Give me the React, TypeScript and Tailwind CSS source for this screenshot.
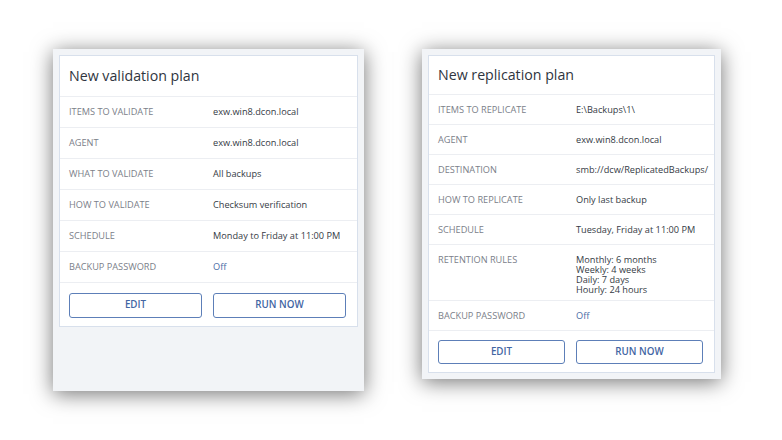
import React from "react";

type Row = { label: string; value: React.ReactNode; blue?: boolean; multi?: boolean };

function Card({
  title,
  rows,
  rowH,
  titleH,
  outerW,
  outerH,
  labelW,
  btnWrap,
  btnH,
}: {
  title: string;
  rows: Row[];
  rowH: string;
  titleH: string;
  outerW: string;
  outerH: string;
  labelW: string;
  btnWrap: string;
  btnH: string;
}) {
  return (
    <div
      className={`${outerW} ${outerH} bg-[#f2f4f7] p-[6px] shadow-[0_3px_20px_rgba(0,0,0,0.55)]`}
    >
      <div className="bg-white border border-[#d8e0ec]">
        <div className={`${titleH} flex items-center px-[9px] text-[14.2px] text-[#2f3540] border-b border-[#eceef2]`}>
          {title}
        </div>
        {rows.map((r, i) => (
          <div
            key={i}
            className={`flex px-[9px] text-[9.2px] border-b border-[#eceef2] whitespace-nowrap ${
              r.multi ? "items-start pt-[10px] pb-[5px]" : `${rowH} items-center`
            }`}
          >
            <div className={`${labelW} shrink-0 text-[#7b8089] leading-[10px]`}>{r.label}</div>
            <div className={`${r.blue ? "text-[#4c6da6]" : "text-[#353b45]"} leading-[10px]`}>{r.value}</div>
          </div>
        ))}
        <div className={`flex gap-[11px] pl-[9px] pr-[11px] ${btnWrap}`}>
          <button className={`flex-1 ${btnH} rounded-[3px] border-[1.5px] border-[#5d7fb8] text-[#4265a3] text-[9.8px] font-semibold`}>
            EDIT
          </button>
          <button className={`flex-1 ${btnH} rounded-[3px] border-[1.5px] border-[#5d7fb8] text-[#4265a3] text-[9.8px] font-semibold`}>
            RUN NOW
          </button>
        </div>
      </div>
    </div>
  );
}

export default function App() {
  return (
    <div
      className="w-[782px] h-[440px] bg-white flex items-start pl-[53px] pt-[49px] gap-[58px]"
      style={{ fontFamily: '"Open Sans", "Noto Sans", sans-serif' }}
    >
      <Card
        title="New validation plan"
        outerW="w-[311px]"
        outerH="h-[342px]"
        titleH="h-[41px]"
        rowH="h-[31px]"
        labelW="w-[144px]"
        btnWrap="pt-[10px] pb-[8px]"
        btnH="h-[25px]"
        rows={[
          { label: "ITEMS TO VALIDATE", value: "exw.win8.dcon.local" },
          { label: "AGENT", value: "exw.win8.dcon.local" },
          { label: "WHAT TO VALIDATE", value: "All backups" },
          { label: "HOW TO VALIDATE", value: "Checksum verification" },
          { label: "SCHEDULE", value: "Monday to Friday at 11:00 PM" },
          { label: "BACKUP PASSWORD", value: "Off", blue: true },
        ]}
      />
      <Card
        title="New replication plan"
        outerW="w-[299px]"
        outerH="h-[330px]"
        titleH="h-[39px]"
        rowH="h-[30px]"
        labelW="w-[138px]"
        btnWrap="pt-[9px] pb-[8px]"
        btnH="h-[24px]"
        rows={[
          { label: "ITEMS TO REPLICATE", value: "E:\\Backups\\1\\" },
          { label: "AGENT", value: "exw.win8.dcon.local" },
          { label: "DESTINATION", value: "smb://dcw/ReplicatedBackups/" },
          { label: "HOW TO REPLICATE", value: "Only last backup" },
          { label: "SCHEDULE", value: "Tuesday, Friday at 11:00 PM" },
          {
            label: "RETENTION RULES",
            multi: true,
            value: (
              <>
                <div>Monthly: 6 months</div>
                <div>Weekly: 4 weeks</div>
                <div>Daily: 7 days</div>
                <div>Hourly: 24 hours</div>
              </>
            ),
          },
          { label: "BACKUP PASSWORD", value: "Off", blue: true },
        ]}
      />
    </div>
  );
}
